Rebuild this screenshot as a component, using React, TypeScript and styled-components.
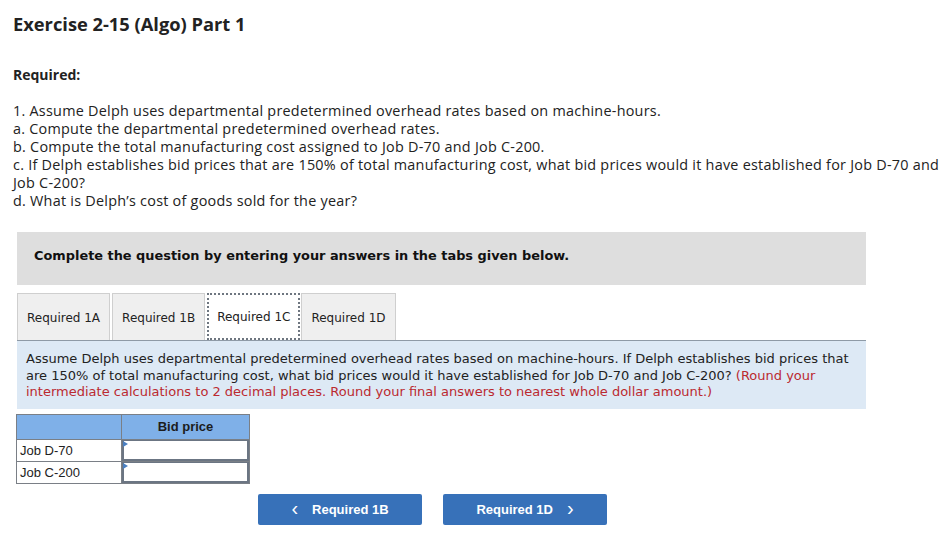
import styled, { createGlobalStyle } from "styled-components";

const GlobalStyle = createGlobalStyle`
  body {
    margin: 0;
    background: #ffffff;
    color: #222;
  }
`;

export default function App() {
  return (
    <>
      <GlobalStyle />
      <Page>
        <Title>Exercise 2-15 (Algo) Part 1</Title>
        <SubTitle>Required:</SubTitle>
        <Question>
          1. Assume Delph uses departmental predetermined overhead rates based on machine-hours.
          <br />
          a. Compute the departmental predetermined overhead rates.
          <br />
          b. Compute the total manufacturing cost assigned to Job D-70 and Job C-200.
          <br />
          c. If Delph establishes bid prices that are 150% of total manufacturing cost, what bid prices would it have established for Job D-70 and Job C-200?
          <br />
          d. What is Delph’s cost of goods sold for the year?
        </Question>

        <Task>
          <Banner>Complete the question by entering your answers in the tabs given below.</Banner>

          <Tabs>
            <Tab>Required 1A</Tab>
            <Tab>Required 1B</Tab>
            <Tab $active>Required 1C</Tab>
            <Tab>Required 1D</Tab>
          </Tabs>

          <Prompt>
            Assume Delph uses departmental predetermined overhead rates based on machine-hours. If Delph establishes bid prices that
            are 150% of total manufacturing cost, what bid prices would it have established for Job D-70 and Job C-200?{" "}
            <Hint>
              (Round your intermediate calculations to 2 decimal places. Round your final answers to nearest whole dollar amount.)
            </Hint>
          </Prompt>

          <AnswerTable>
            <thead>
              <tr>
                <HeadCell />
                <HeadCell>Bid price</HeadCell>
              </tr>
            </thead>
            <tbody>
              {["Job D-70", "Job C-200"].map((job) => (
                <tr key={job}>
                  <LabelCell>{job}</LabelCell>
                  <InputCell>
                    <Marker />
                    <Entry />
                  </InputCell>
                </tr>
              ))}
            </tbody>
          </AnswerTable>

          <NavRow>
            <NavButton>
              <Chevron>&lsaquo;</Chevron>
              Required 1B
            </NavButton>
            <NavButton>
              Required 1D
              <Chevron>&rsaquo;</Chevron>
            </NavButton>
          </NavRow>
        </Task>
      </Page>
    </>
  );
}

const Page = styled.div`
  width: 947px;
  height: 537px;
  padding: 12px 0 0 13px;
  box-sizing: border-box;
  font-family: "Open Sans", "Liberation Sans", sans-serif;
  overflow: hidden;
`;

const Title = styled.h1`
  margin: 0;
  font-size: 18.3px;
  line-height: 24px;
  font-weight: 700;
  color: #222;
`;

const SubTitle = styled.h2`
  margin: 30px 0 0;
  font-size: 14px;
  line-height: 18px;
  font-weight: 700;
  color: #222;
`;

const Question = styled.p`
  margin: 18px 0 0;
  max-width: 934px;
  font-size: 14.4px;
  letter-spacing: 0.25px;
  line-height: 18px;
  color: #222;
`;

const Task = styled.section`
  margin: 22px 0 0 4px;
  width: 849px;
  font-family: "DejaVu Sans", Verdana, sans-serif;
`;

const Banner = styled.div`
  height: 53px;
  box-sizing: border-box;
  padding: 0 17px 7px;
  display: flex;
  align-items: center;
  background: #dedede;
  font-size: 12.9px;
  font-weight: 700;
  color: #111;
`;

const Tabs = styled.div`
  display: flex;
  gap: 2px;
  margin-top: 8px;
  border-bottom: 1px solid #8e9aa6;
`;

const Tab = styled.div<{ $active?: boolean }>`
  height: 47px;
  box-sizing: border-box;
  padding: 1px ${(p) => (p.$active ? "8px" : "9px")} 0;
  display: flex;
  align-items: center;
  font-size: 12px;
  color: #222;
  background: ${(p) => (p.$active ? "#ffffff" : "#efefef")};
  border: ${(p) => (p.$active ? "2px dotted #6e7680" : "1px solid #cfcfcf")};
  border-bottom: ${(p) => (p.$active ? "2px dotted #6e7680" : "none")};
  margin-bottom: ${(p) => (p.$active ? "-1px" : "0")};
  margin-right: ${(p) => (p.$active ? "-1px" : "0")};
`;

const Prompt = styled.div`
  background: #dde9f5;
  padding: 10px 9px 8px 9px;
  font-size: 13px;
  line-height: 16.5px;
  color: #222;
`;

const Hint = styled.span`
  color: #bb2a30;
`;

const AnswerTable = styled.table`
  margin: 5px 0 0 -1px;
  border-collapse: collapse;
  font-family: "Liberation Sans", Arial, sans-serif;
  font-size: 13px;
  border: 1px solid #7a7f86;
`;

const HeadCell = styled.th`
  height: 24px;
  padding: 0;
  background: #7fb0e8;
  border: 1px solid #7a7f86;
  font-weight: 700;
  color: #1c1c1c;
  text-align: center;

  &:first-child {
    width: 104px;
  }
  &:last-child {
    width: 127px;
  }
`;

const LabelCell = styled.td`
  height: 21px;
  padding: 0 0 0 3px;
  border: 1px solid #7a7f86;
  color: #222;
`;

const InputCell = styled.td`
  position: relative;
  padding: 0;
  border: 1px solid #7a7f86;
`;

const Marker = styled.span`
  position: absolute;
  left: 1px;
  top: 1px;
  width: 0;
  height: 0;
  border-top: 3px solid transparent;
  border-bottom: 3px solid transparent;
  border-left: 5px solid #4a7fc1;
`;

const Entry = styled.div`
  height: 21px;
  box-sizing: border-box;
  border: 2px solid #6b7583;
  border-top-width: 1px;
  background: #fff;
`;

const NavRow = styled.div`
  display: flex;
  gap: 21px;
  margin: 10px 0 0 241px;
`;

const NavButton = styled.button`
  width: 164px;
  height: 31px;
  border: none;
  border-radius: 2px;
  background: #3771b9;
  color: #fff;
  font-family: "Liberation Sans", Arial, sans-serif;
  font-size: 13px;
  font-weight: 700;
  display: flex;
  align-items: center;
  justify-content: center;
  gap: 14px;
  padding: 0;
`;

const Chevron = styled.span`
  font-size: 20px;
  font-weight: 400;
  line-height: 1;
  margin-top: -3px;
`;
